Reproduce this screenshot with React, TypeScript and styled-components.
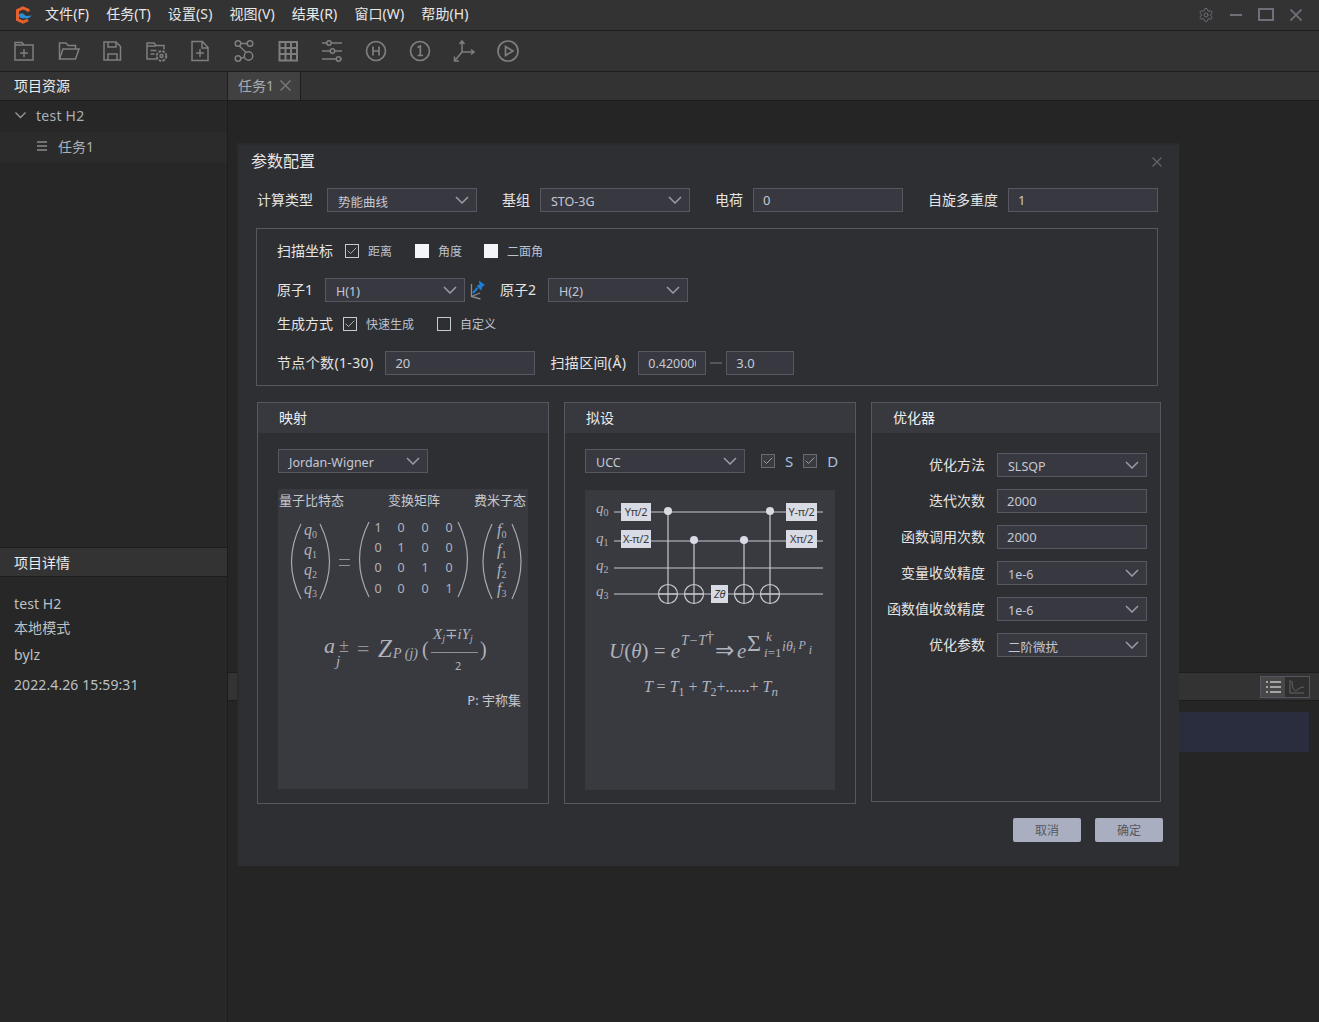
import React from 'react';
import styled, { createGlobalStyle } from 'styled-components';
import { Settings, Check } from 'lucide-react';

const FONT = `"Noto Sans", "Noto Sans CJK SC", sans-serif`;
const MATH = `"Liberation Serif", "DejaVu Serif", serif`;

const Global = createGlobalStyle`
  html, body { margin: 0; padding: 0; background: #252525; }
  * { box-sizing: border-box; }
  body { font-family: ${FONT}; overflow: hidden; }
`;

const Page = styled.div`
  width: 1319px; height: 1022px; display: flex; flex-direction: column;
  background: #252525; color: #ddd; position: relative; overflow: hidden;
`;
const TitleBar = styled.div`
  height: 31px; flex: none; display: flex; align-items: center; background: #333;
  border-bottom: 1px solid #1d1d1d; padding: 0 17px 1px 14px;
`;
const Menu = styled.nav`display: flex; gap: 17px; margin-left: 13px; padding-bottom: 2px;`;
const MenuItem = styled.span`font-size: 14px; line-height: 20px; color: #e8e8e8; white-space: nowrap; letter-spacing: 0.1px;`;
const WinControls = styled.div`margin-left: auto; display: flex; align-items: center; color: #6f707a; gap: 16px;`;
const Toolbar = styled.div`
  height: 41px; flex: none; display: flex; align-items: center; background: #333;
  border-bottom: 1px solid #1d1d1d; padding: 0 0 0 12px; gap: 20px; color: #7f7f7f;
`;
const Body = styled.div`flex: 1; display: flex; min-height: 0;`;
const Sidebar = styled.aside`
  width: 228px; flex: none; display: flex; flex-direction: column; background: #272727;
  border-right: 1px solid #1d1d1d;
`;
const PaneHead = styled.div`
  height: 29px; flex: none; display: flex; align-items: center; padding: 0 14px 2px; background: #333;
  border-bottom: 1px solid #1d1d1d; font-size: 14px; color: #ececec;
`;
const TreeRow = styled.div<{ $sub?: boolean }>`
  height: 31px; display: flex; align-items: center; font-size: 14px; color: #a9b0b8;
  padding: 0 0 ${p => (p.$sub ? 3 : 2)}px ${p => (p.$sub ? 36 : 15)}px; gap: 10px;
  letter-spacing: ${p => (p.$sub ? 0 : 0.25)}px;
  background: ${p => (p.$sub ? '#2b2b2b' : 'transparent')};
`;
const Spacer = styled.div`flex: 1;`;
const DetailHead = styled(PaneHead)`border-top: 1px solid #1d1d1d; height: 30px; padding-bottom: 0;`;
const Details = styled.div`padding-top: 14px; display: flex; flex-direction: column;`;
const DetailTail = styled.div`flex: 0 0 323px;`;
const DetailLine = styled.div<{ $h: number }>`
  height: ${p => p.$h}px; display: flex; align-items: center; padding-left: 14px; font-size: 14px; color: #bcc0c4; letter-spacing: 0.1px;
`;
const Main = styled.main`flex: 1; display: flex; flex-direction: column; min-width: 0;`;
const TabBar = styled.div`height: 29px; flex: none; display: flex; background: #333; border-bottom: 1px solid #1d1d1d;`;
const Tab = styled.div`
  width: 73px; display: flex; align-items: center; gap: 6px; padding: 0 0 2px 10px; background: #414141;
  border-right: 1px solid #1d1d1d; font-size: 14px; color: #a8acb0;
`;
const Workspace = styled.div`height: 571px; flex: none;`;
const LogHead = styled.div`
  height: 29px; flex: none; background: #333; border-top: 1px solid #1d1d1d; border-bottom: 1px solid #1d1d1d;
  display: flex; align-items: center; justify-content: flex-end; padding-right: 9px;
`;
const Toggle = styled.div`display: flex; width: 50px; height: 22px; border: 1px solid #555660;`;
const ToggleCell = styled.div<{ $on?: boolean }>`
  flex: 1; display: flex; align-items: center; justify-content: center;
  background: ${p => (p.$on ? '#474747' : '#2f2f2f')};
`;
const LogRow = styled.div`height: 40px; margin: 11px 10px 0 100px; background: #292d3e;`;

/* ---------- dialog ---------- */
const Dialog = styled.section`
  position: absolute; left: 237px; top: 143px; width: 942px; height: 723px; background: #2e2f33;
  box-shadow: inset 0 2px 0 #2a2b2e, inset 2px 0 0 #2a2b2e; padding: 0 18px 0 14px; display: flex; flex-direction: column;
`;
const DialogHead = styled.header`height: 37px; display: flex; align-items: center; justify-content: space-between; margin-right: -1px;`;
const DialogTitle = styled.h2`margin: 0 0 1px; font-size: 16px; line-height: 22px; font-weight: 400; color: #e8e8e8;`;
const TopRow = styled.div`margin-top: 8px; height: 24px; display: flex; align-items: center; padding-left: 6px;`;
const Label = styled.span<{ $ml?: number; $mr?: number }>`
  font-size: 14px; line-height: 20px; color: #e4e4e4; white-space: nowrap;
  margin-left: ${p => p.$ml ?? 0}px; margin-right: ${p => p.$mr ?? 0}px;
`;
const WideLabel = styled(Label)`letter-spacing: 0.35px;`;
const Field = styled.div<{ $w: number }>`
  width: ${p => p.$w}px; height: 24px; flex: none; display: flex; align-items: center; justify-content: space-between;
  background: #383940; border: 1px solid #565760; padding: 2px 7px 0 10px; font-size: 12.5px; color: #c4c8d4; white-space: nowrap; overflow: hidden;
`;
const FieldInput = styled(Field)`padding: 0 0 0 9px; font-size: 13px;`;
const ClipText = styled.span`display: block; width: 48px; overflow: hidden; font-size: 12.5px;`;
const ChevronSvg = styled.svg`flex: none; width: 14px; height: 8px; margin-top: -2px; color: #9b9ca3; fill: none; stroke: currentColor; stroke-width: 1.5;`;
const ScanBox = styled.div`
  margin: 16px 3px 0 5px; height: 158px; border: 1px solid #565760; padding: 0 20px; display: flex; flex-direction: column;
`;
const ScanRow = styled.div<{ $h: number }>`height: ${p => p.$h}px; display: flex; align-items: center; flex: none;`;
const Box = styled.span<{ $white?: boolean; $ml?: number }>`
  width: 14px; height: 14px; flex: none; display: inline-flex; align-items: center; justify-content: center;
  border: 1px solid ${p => (p.$white ? '#f4f5f8' : '#c9cad0')}; background: ${p => (p.$white ? '#f4f5f8' : 'transparent')};
  color: #c9cad0; margin-left: ${p => p.$ml ?? 0}px;
`;
const BoxText = styled.span<{ $ml?: number }>`font-size: 12px; color: #bcc2cf; margin-left: ${p => p.$ml ?? 9}px; white-space: nowrap;`;
const Dash = styled.span`width: 12px; height: 2px; background: #55565d; margin: 0 4px; flex: none;`;
const Panels = styled.div`margin: 16px 0 0 6px; display: flex; gap: 15px; align-items: flex-start;`;
const Panel = styled.div<{ $w: number; $h: number }>`
  width: ${p => p.$w}px; height: ${p => p.$h}px; flex: none; border: 1px solid #565760; display: flex; flex-direction: column;
`;
const PanelHead = styled.div`height: 30px; flex: none; background: #38393e; display: flex; align-items: center; padding: 0 0 2px 21px; font-size: 14px; color: #eee;`;
const PanelBody = styled.div`padding: 16px 20px 0; display: flex; flex-direction: column;`;
const SelectRow = styled.div<{ $mb: number }>`display: flex; align-items: center; height: 24px; margin-bottom: ${p => p.$mb}px;`;
const Figure = styled.svg`display: block; width: 250px; height: 300px; background: #393a40; flex: none;`;
const BigLetter = styled.span<{ $ml: number }>`font-size: 15px; color: #a9c0e0; margin-left: ${p => p.$ml}px;`;
const DarkBox = styled(Box)`border-color: #6a6b72; background: #3a3b41; color: #b8b9c0;`;
const FormBody = styled.div`padding: 20px 13px 0 0; display: flex; flex-direction: column; gap: 12px;`;
const FormRow = styled.div`display: flex; align-items: center; justify-content: flex-end; gap: 12px; height: 24px;`;
const Footer = styled.div`margin: 14px -2px 0 0; display: flex; justify-content: flex-end; gap: 14px;`;
const Btn = styled.button`
  width: 68px; height: 24px; border: 0; border-radius: 2px; background: #a9afc0; color: #55575f;
  font-family: ${FONT}; font-size: 12px; padding: 0;
`;

const ic = { width: 24, height: 24, viewBox: '0 0 24 24', fill: 'none', stroke: 'currentColor', strokeWidth: 1.5 } as const;

const Tools = [
  <svg {...ic} key="1"><path d="M3 21V3.500h7l2 2.500h9v15z M3 6h9" /><path d="M12 10v8M8 14h8" /></svg>,
  <svg {...ic} key="2"><path d="M3.500 20V4h6.500l2 2.500h7.500V10" /><path d="M3.500 20l3.500-10h16l-3.500 10z" /></svg>,
  <svg {...ic} key="3"><path d="M4 3h12l4.500 4.500V21H4z" /><path d="M8 3v5h8V3M8 21v-6h9v6" /></svg>,
  <svg {...ic} key="4"><path d="M13 20H3V4h7l2 2.500h8v4" /><path d="M3 7h9M6.500 11.500h6M6.500 15h4" /><circle cx="17.500" cy="17" r="4.800" strokeDasharray="2.600 1.200" strokeWidth="2" /><circle cx="17.500" cy="17" r="1.500" /></svg>,
  <svg {...ic} key="5"><path d="M4 2.500h10.500L20 8.500V21.500H4z M14 2.500V9h6" /><path d="M12 10v8M8 14h8" /></svg>,
  <svg {...ic} key="6"><circle cx="6" cy="4.500" r="2.800" /><circle cx="18" cy="4.500" r="2.800" /><circle cx="6" cy="19.500" r="2.800" /><circle cx="16.500" cy="17" r="4.200" /><path d="M8.800 4.500h6.400M7.500 7l6.500 6.500M8.800 19.200l3.800-1" /></svg>,
  <svg {...ic} key="7" strokeWidth={2}><path d="M3.500 3h17.500v18.500H3.500zM3.500 9h17.500M3.500 15h17.500M9.500 3v18.500M15 3v18.500" /></svg>,
  <svg {...ic} key="8"><path d="M2 4h5M12 4h10M2 12h8M15 12h7M2 20h14M21 20h1" /><circle cx="9" cy="4" r="2.200" /><circle cx="12.500" cy="12" r="2.200" /><circle cx="18.500" cy="20" r="2.200" /></svg>,
  <svg {...ic} key="9" strokeWidth={1.700}><circle cx="12" cy="12" r="9.500" /><path d="M9 7.500v9M15 7.500v9M9 12h6" /></svg>,
  <svg {...ic} key="10" strokeWidth={1.700}><circle cx="12" cy="12" r="9.500" /><path d="M9.500 8.500l2.800-1.500v9.500M9.500 16.500h5.500" /></svg>,
  <svg {...ic} key="11"><path d="M10 13V2.500M7.500 5L10 2l2.500 3M10 13l11 0M19 10.500l3 2.500-3 2.500M10 13l-7 8.500M2.500 17.500V22h4.500" /></svg>,
  <svg {...ic} key="12" strokeWidth={1.700}><circle cx="12" cy="12" r="10" /><path d="M9.500 7.500l7.500 4.500-7.500 4.500z" /></svg>,
];

const Logo = () => (
  <svg width="18" height="18" viewBox="0 0 18 18" fill="none">
    <path d="M14.500 5.500L14 4L9 1.800L3.500 4.500V13.500L9 16.200L14 14" stroke="#e8602a" strokeWidth="3" />
    <path d="M4.500 9.500C5.500 6.500 9.500 6.500 11 9.500C12.500 10.500 15 9.500 17.500 9.500C15.500 12.500 13 12.800 11 12.300C8.500 12.800 5.500 12 4.500 9.500Z" fill="#2c8fd6" />
  </svg>
);

const Chevron = () => <ChevronSvg viewBox="0 0 14 8"><path d="M1 1l6 6 6-6" /></ChevronSvg>;
const XIcon = ({ s, c, w = 1.500 }: { s: number; c: string; w?: number }) => (
  <svg width={s} height={s} viewBox={`0 0 ${s} ${s}`} style={{ flex: 'none' }}><path d={`M0.500 0.500L${s - 0.500} ${s - 0.500}M${s - 0.500} 0.500L0.500 ${s - 0.500}`} stroke={c} strokeWidth={w} /></svg>
);
const Sel = ({ w, children }: { w: number; children: React.ReactNode }) => (
  <Field $w={w}><span>{children}</span><Chevron /></Field>
);
const Tick = () => <Check size={12} strokeWidth={1.600} />;

const Pin = () => (
  <svg width="16" height="20" viewBox="0 0 16 20" style={{ marginLeft: 5, flex: 'none' }}>
    <path d="M9 0.500l6 4.500-2.500 1.500-1.200 4-4.800-4.500 3-1.500z" fill="#1c7ed6" />
    <path d="M7.500 8L3 13" stroke="#1c7ed6" strokeWidth="2" />
    <path d="M1.500 4v12.500l9 2.500M1.500 16.500L10 13" stroke="#8a8d96" strokeWidth="1.300" fill="none" />
  </svg>
);

const mathProps = { fill: '#b0b2bc', fontFamily: MATH } as const;
const Q = ({ x, y, l, s, f = 16, sf = 10 }: { x: number; y: number; l: string; s: string; f?: number; sf?: number }) => (
  <text x={x} y={y} {...mathProps} fontSize={f} fontStyle="italic">{l}<tspan dy="3" fontSize={sf} fontStyle="normal">{s}</tspan></text>
);
const Paren = ({ d }: { d: string }) => <path d={d} fill="none" stroke="#a6a8b2" strokeWidth="1.200" />;

const MappingFigure = () => (
  <Figure viewBox="0 0 250 300">
    <g fill="#c6c8ce" fontFamily={FONT} fontSize="13">
      <text x="1" y="16">量子比特态</text>
      <text x="110" y="16">变换矩阵</text>
      <text x="196" y="16">费米子态</text>
    </g>
    <Paren d="M23 35Q4 73 23 110" /><Paren d="M42 35Q61 73 42 110" />
    {['0', '1', '2', '3'].map((s, i) => <Q key={s} x={26} y={[46, 66, 86, 105][i]} l="q" s={s} />)}
    <path d="M61 70.500H72M61 76.500H72" stroke="#8f919b" strokeWidth="1.200" />
    <Paren d="M91 33Q72 70 91 108" /><Paren d="M180 33Q199 70 180 108" />
    {[0, 1, 2, 3].map(r => [100, 123, 147, 171].map((x, c) => (
      <text key={`${r}${c}`} x={x} y={[43, 63, 83, 104][r]} {...mathProps} fontFamily={FONT} fontSize="12.500" textAnchor="middle">{r === c ? 1 : 0}</text>
    )))}
    <Paren d="M214 35Q196 73 214 110" /><Paren d="M234 35Q252 73 234 110" />
    {['0', '1', '2', '3'].map((s, i) => <Q key={s} x={219} y={[46, 66, 86, 105][i]} l="f" s={s} />)}
    <text x="46" y="164" {...mathProps} fontSize="22" fontStyle="italic">a</text>
    <text x="61" y="163" {...mathProps} fontSize="18" fill="#9a9ca6">±</text>
    <text x="58" y="177" {...mathProps} fontSize="15" fontStyle="italic">j</text>
    <text x="79" y="167" {...mathProps} fontSize="22" fill="#8f919b">=</text>
    <text x="100" y="168" {...mathProps} fontSize="25" fontStyle="italic">Z</text>
    <text x="115" y="169" {...mathProps} fontSize="14" fontStyle="italic">P (j)</text>
    <text x="144" y="167" {...mathProps} fontSize="20">(</text>
    <text x="155" y="150" {...mathProps} fontSize="15" fontStyle="italic">X<tspan dy="3" fontSize="10">j</tspan><tspan dy="-3" fontStyle="normal">∓</tspan>iY<tspan dy="3" fontSize="10">j</tspan></text>
    <path d="M153 163.500H200" stroke="#8f919b" strokeWidth="1" />
    <text x="177" y="181" {...mathProps} fontFamily={FONT} fontSize="11">2</text>
    <text x="202" y="167" {...mathProps} fontSize="20">)</text>
    <text x="243" y="216" fill="#c6c8ce" fontFamily={FONT} fontSize="13" textAnchor="end">P: 宇称集</text>
  </Figure>
);

const Gate = ({ x, y, w, t, h = 18, it }: { x: number; y: number; w: number; t: string; h?: number; it?: boolean }) => (
  <g>
    <rect x={x} y={y} width={w} height={h} fill="#d8dae4" />
    <text x={x + w / 2} y={y + h / 2 + 4} fontFamily={FONT} fontSize="11" fill="#3a3b41" textAnchor="middle" letterSpacing="-0.300" fontStyle={it ? 'italic' : 'normal'}>{t}</text>
  </g>
);
const Cnot = ({ x, y0 }: { x: number; y0: number }) => (
  <g stroke="#c6c8d2" strokeWidth="1.200" fill="none">
    <path d={`M${x} ${y0}V113.500`} />
    <circle cx={x} cy={y0} r="4" fill="#d8dae4" stroke="none" />
    <circle cx={x} cy="104" r="9.500" />
    <path d={`M${x - 9.500} 104H${x + 9.500}`} />
  </g>
);

const AnsatzFigure = () => (
  <Figure viewBox="0 0 250 300">
    {[22, 51, 78, 104].map(y => <path key={y} d={`M29 ${y}H238`} stroke="#c6c8d2" strokeWidth="1.200" />)}
    {['0', '1', '2', '3'].map((s, i) => <Q key={s} x={11} y={[23, 53, 80, 106][i]} l="q" s={s} f={15} />)}
    <Gate x={36} y={13} w={30} t="Yπ/2" />
    <Gate x={36} y={40} w={30} t="X-π/2" />
    <Gate x={201} y={13} w={31} t="Y-π/2" />
    <Gate x={201} y={40} w={31} t="Xπ/2" />
    <Cnot x={83} y0={21} /><Cnot x={109} y0={50} /><Cnot x={159} y0={50} /><Cnot x={185} y0={21} />
    <Gate x={126} y={95} w={17} t="Zθ" it />
    <text x="24" y="168" {...mathProps} fontSize="21" fontStyle="italic">U<tspan fontStyle="normal">(</tspan>θ<tspan fontStyle="normal">) = </tspan>e</text>
    <text x="96" y="155" {...mathProps} fontSize="14" fontStyle="italic">T−T<tspan fontStyle="normal" dy="-2" fontSize="16">†</tspan></text>
    <text x="130" y="168" fill="#b0b2bc" fontFamily={'"DejaVu Sans", sans-serif'} fontSize="23">⇒</text>
    <text x="152" y="168" {...mathProps} fontSize="21" fontStyle="italic">e</text>
    <text x="162" y="161" {...mathProps} fontSize="24">Σ</text>
    <text x="181" y="151" {...mathProps} fontSize="13" fontStyle="italic">k</text>
    <text x="179" y="167" {...mathProps} fontSize="13" fontStyle="italic">i<tspan fontStyle="normal">=1</tspan></text>
    <text x="197" y="161" {...mathProps} fontSize="14" fontStyle="italic">iθ<tspan fontSize="10" dy="2">i</tspan><tspan dy="-4" fontSize="12"> P</tspan><tspan dy="5" fontSize="12"> i</tspan></text>
    <text x="59" y="202" {...mathProps} fontSize="16" fontStyle="italic">T <tspan fontStyle="normal">=</tspan> T<tspan dy="4" fontSize="12" fontStyle="normal">1</tspan><tspan dy="-4" fontStyle="normal"> + </tspan>T<tspan dy="4" fontSize="12" fontStyle="normal">2</tspan><tspan dy="-4" fontStyle="normal">+......+ </tspan>T<tspan dy="4" fontSize="13">n</tspan></text>
  </Figure>
);

const formRows: { l: string; v: string; sel: boolean }[] = [
  { l: '优化方法', v: 'SLSQP', sel: true },
  { l: '迭代次数', v: '2000', sel: false },
  { l: '函数调用次数', v: '2000', sel: false },
  { l: '变量收敛精度', v: '1e-6', sel: true },
  { l: '函数值收敛精度', v: '1e-6', sel: true },
  { l: '优化参数', v: '二阶微扰', sel: true },
];

export default function App() {
  return (
    <Page>
      <Global />
      <TitleBar>
        <Logo />
        <Menu>
          {['文件(F)', '任务(T)', '设置(S)', '视图(V)', '结果(R)', '窗口(W)', '帮助(H)'].map(m => <MenuItem key={m}>{m}</MenuItem>)}
        </Menu>
        <WinControls>
          <Settings size={16} strokeWidth={1.400} />
          <svg width="12" height="2" viewBox="0 0 12 2"><path d="M0 1h12" stroke="currentColor" strokeWidth="2" /></svg>
          <svg width="16" height="13" viewBox="0 0 16 13" fill="none"><path d="M1 1h14v11H1z" stroke="currentColor" strokeWidth="2" /></svg>
          <XIcon s={12} c="currentColor" w={1.800} />
        </WinControls>
      </TitleBar>
      <Toolbar>{Tools}</Toolbar>
      <Body>
        <Sidebar>
          <PaneHead>项目资源</PaneHead>
          <TreeRow>
            <svg width="11" height="7" viewBox="0 0 11 7" fill="none"><path d="M0.500 0.500l5 5 5-5" stroke="#9a9a9a" strokeWidth="1.300" /></svg>
            test H2
          </TreeRow>
          <TreeRow $sub>
            <svg width="12" height="10" viewBox="0 0 12 10"><path d="M1 1h10M1 5h10M1 9h10" stroke="#8a8a8a" strokeWidth="1.500" /></svg>
            任务1
          </TreeRow>
          <Spacer />
          <DetailHead>项目详情</DetailHead>
          <Details>
            <DetailLine $h={24}>test H2</DetailLine>
            <DetailLine $h={24}>本地模式</DetailLine>
            <DetailLine $h={30}>bylz</DetailLine>
            <DetailLine $h={30}>2022.4.26 15:59:31</DetailLine>
          </Details>
          <DetailTail />
        </Sidebar>
        <Main>
          <TabBar><Tab>任务1<XIcon s={11} c="#777" /></Tab></TabBar>
          <Workspace />
          <LogHead>
            <Toggle>
              <ToggleCell $on><svg width="16" height="14" viewBox="0 0 16 14"><path d="M5 2h11M5 7h11M5 12h11M1 2h2M1 7h2M1 12h2" stroke="#c4c4c4" strokeWidth="1.500" /></svg></ToggleCell>
              <ToggleCell><svg width="16" height="16" viewBox="0 0 16 16" fill="none"><path d="M1 1v13h14" stroke="#666" /><path d="M3 2c0 6 2 10 4 10 2-2 4-4 8-4" stroke="#666" /></svg></ToggleCell>
            </Toggle>
          </LogHead>
          <LogRow />
        </Main>
      </Body>

      <Dialog>
        <DialogHead>
          <DialogTitle>参数配置</DialogTitle>
          <XIcon s={10} c="#62636b" w={1.300} />
        </DialogHead>
        <TopRow>
          <Label $mr={14}>计算类型</Label><Sel w={150}>势能曲线</Sel>
          <Label $ml={25} $mr={10}>基组</Label><Sel w={150}>STO-3G</Sel>
          <Label $ml={25} $mr={10}>电荷</Label><FieldInput $w={150}>0</FieldInput>
          <Label $ml={25} $mr={10}>自旋多重度</Label><FieldInput $w={150}>1</FieldInput>
        </TopRow>
        <ScanBox>
          <ScanRow $h={44}>
            <Label $mr={12}>扫描坐标</Label>
            <Box><Tick /></Box><BoxText>距离</BoxText>
            <Box $white $ml={23} /><BoxText>角度</BoxText>
            <Box $white $ml={22} /><BoxText>二面角</BoxText>
          </ScanRow>
          <ScanRow $h={34}>
            <Label $mr={12}>原子1</Label><Sel w={140}>H(1)</Sel><Pin />
            <Label $ml={14} $mr={12}>原子2</Label><Sel w={140}>H(2)</Sel>
          </ScanRow>
          <ScanRow $h={34}>
            <Label $mr={10}>生成方式</Label>
            <Box><Tick /></Box><BoxText>快速生成</BoxText>
            <Box $ml={23} /><BoxText>自定义</BoxText>
          </ScanRow>
          <ScanRow $h={44}>
            <WideLabel $mr={12}>节点个数(1-30)</WideLabel><FieldInput $w={150}>20</FieldInput>
            <WideLabel $ml={15} $mr={12}>扫描区间(Å)</WideLabel>
            <FieldInput $w={68}><ClipText>0.420000</ClipText></FieldInput><Dash /><FieldInput $w={68}>3.0</FieldInput>
          </ScanRow>
        </ScanBox>
        <Panels>
          <Panel $w={292} $h={402}>
            <PanelHead>映射</PanelHead>
            <PanelBody>
              <SelectRow $mb={16}><Sel w={150}>Jordan-Wigner</Sel></SelectRow>
              <MappingFigure />
            </PanelBody>
          </Panel>
          <Panel $w={292} $h={402}>
            <PanelHead>拟设</PanelHead>
            <PanelBody>
              <SelectRow $mb={17}>
                <Sel w={160}>UCC</Sel>
                <DarkBox $ml={16}><Tick /></DarkBox><BigLetter $ml={10}>S</BigLetter>
                <DarkBox $ml={10}><Tick /></DarkBox><BigLetter $ml={10}>D</BigLetter>
              </SelectRow>
              <AnsatzFigure />
            </PanelBody>
          </Panel>
          <Panel $w={290} $h={400}>
            <PanelHead>优化器</PanelHead>
            <FormBody>
              {formRows.map(r => (
                <FormRow key={r.l}>
                  <Label>{r.l}</Label>
                  {r.sel ? <Sel w={150}>{r.v}</Sel> : <FieldInput $w={150}>{r.v}</FieldInput>}
                </FormRow>
              ))}
            </FormBody>
          </Panel>
        </Panels>
        <Footer>
          <Btn>取消</Btn><Btn>确定</Btn>
        </Footer>
      </Dialog>
    </Page>
  );
}
